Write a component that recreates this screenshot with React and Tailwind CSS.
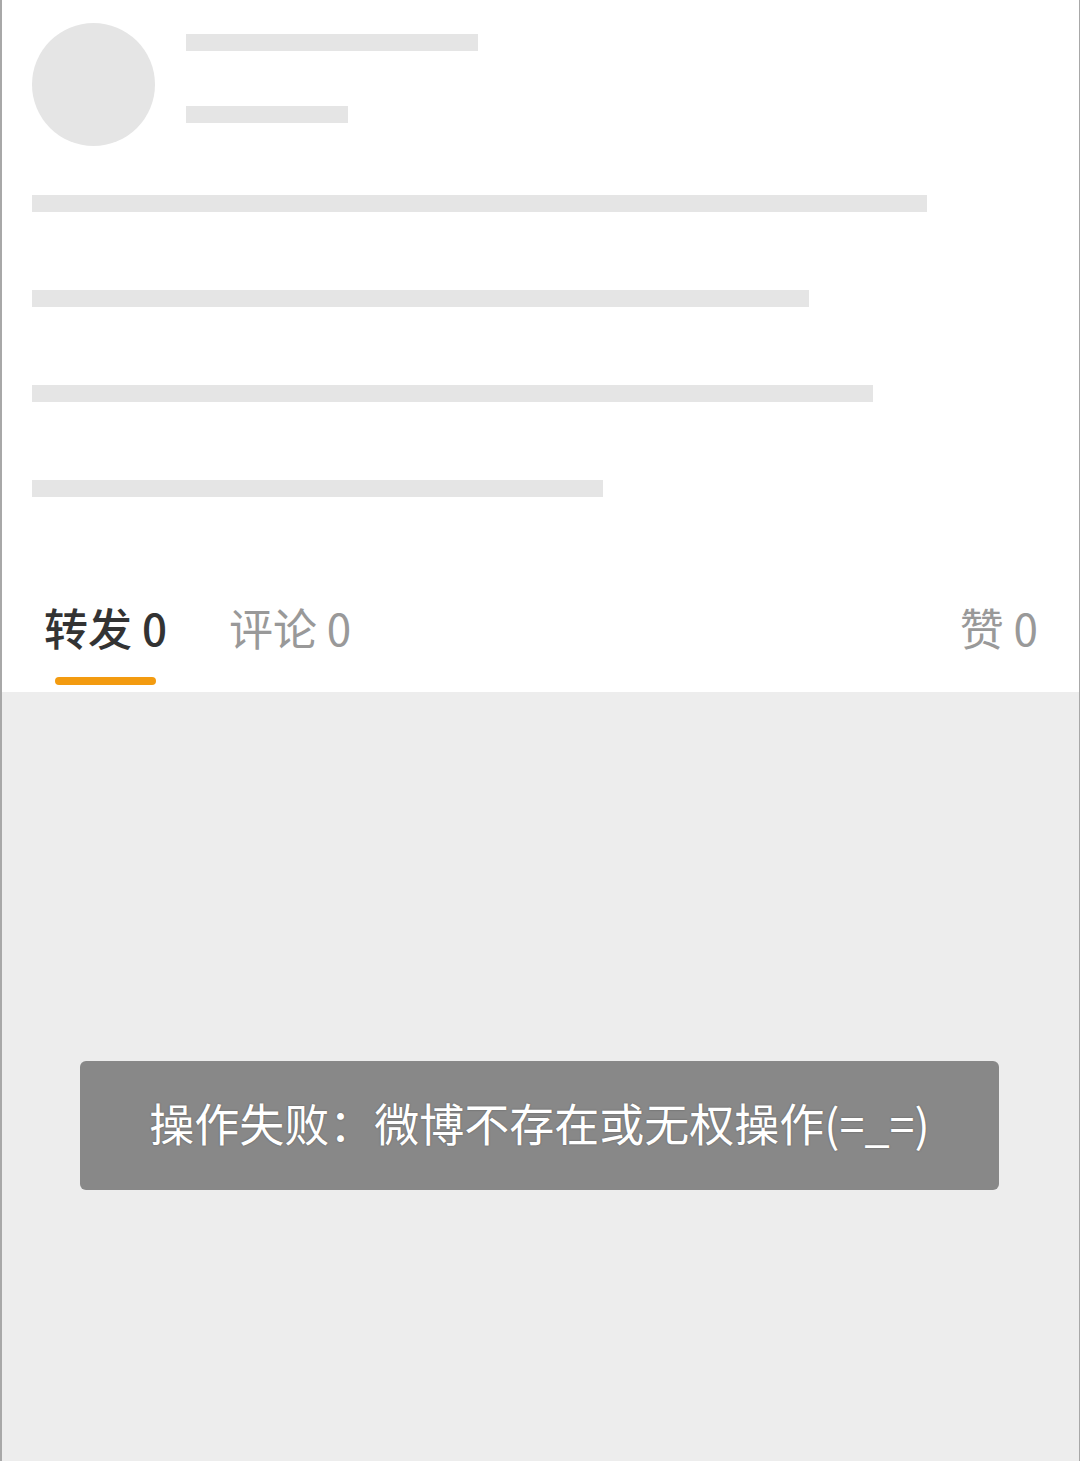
export default function App() {
  const lines = [895, 777, 841, 571];

  return (
    <div
      className="flex h-[1461px] w-[1080px] flex-col border-l-2 border-r border-[#a8a8a8] bg-[#ededed]"
      style={{ fontFamily: '"Noto Sans CJK SC", "Noto Sans", sans-serif' }}
    >
      {/* Skeleton card + tabs */}
      <div className="flex h-[692px] flex-col bg-white">
        <div className="flex flex-col pl-[30px] pt-[23px]">
          <div className="flex gap-[31px]">
            <div className="h-[123px] w-[123px] rounded-full bg-[#e5e5e5]" />
            <div className="flex flex-col pt-[11px]">
              <div className="h-[17px] w-[292px] bg-[#e5e5e5]" />
              <div className="mt-[55px] h-[17px] w-[162px] bg-[#e5e5e5]" />
            </div>
          </div>
          <div className="mt-[49px] flex flex-col gap-[78px]">
            {lines.map((w, i) => (
              <div key={i} className="h-[17px] bg-[#e5e5e5]" style={{ width: w }} />
            ))}
          </div>
        </div>

        <div className="mt-auto flex items-start pl-[42px] pr-[41px]">
          <div className="flex flex-col items-center">
            <span className="h-[60px] text-[44px] leading-[54px] font-medium text-[#333333]">转发 0</span>
            <div className="mt-[17px] h-[8px] w-[101px] rounded-full bg-[#f39b10]" />
          </div>
          <span className="ml-[62px] h-[60px] text-[44px] leading-[54px] text-[#999999]">评论 0</span>
          <span className="ml-auto h-[60px] text-[44px] leading-[54px] text-[#999999]">赞 0</span>
        </div>
        <div className="h-[7px]" />
      </div>

      {/* Error toast */}
      <div className="flex flex-1 flex-col items-center pt-[369px]">
        <div className="ml-[-2px] flex h-[129px] w-[919px] items-center justify-center rounded-[6px] bg-[#888888] pb-[7px]">
          <span className="text-[45px] leading-none text-white [text-shadow:0_0_2px_rgba(0,0,0,0.35)]">
            操作失败：微博不存在或无权操作(=_=)
          </span>
        </div>
      </div>
    </div>
  );
}
